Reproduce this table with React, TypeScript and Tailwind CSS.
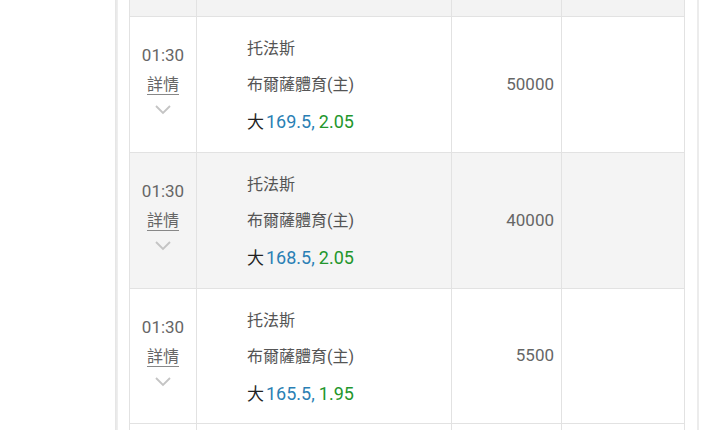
import React from "react";

const rows = [
  { bg: "bg-white", amt: "50000", line: "169.5", odds: "2.05", h: "h-[136px]" },
  { bg: "bg-[#f4f4f4]", amt: "40000", line: "168.5", odds: "2.05", h: "h-[136px]" },
  { bg: "bg-white", amt: "5500", line: "165.5", odds: "1.95", h: "h-[135px]" },
];

function Chevron() {
  return (
    <svg width="18" height="11" viewBox="0 0 18 11" fill="none">
      <path d="M2 2 L9 9 L16 2" stroke="#c4c4c4" strokeWidth="1.8" />
    </svg>
  );
}

export default function App() {
  return (
    <div
      className="w-[720px] h-[430px] overflow-hidden bg-white flex text-[16px]"
      style={{ fontFamily: "Roboto, 'Noto Sans CJK TC', sans-serif" }}
    >
      <div className="w-[115px] shrink-0" />
      <div className="w-[3px] shrink-0 bg-gradient-to-r from-[#e4e4e4] to-[#f0f0f0]" />
      <div className="w-[11px] shrink-0" />
      <div className="w-[556px] shrink-0 border-l border-r border-[#e2e2e2] flex flex-col">
        <div className="flex h-[17px] shrink-0 bg-[#f3f3f3] border-b border-[#e2e2e2]">
          <div className="w-[67px] border-r border-[#e2e2e2]" />
          <div className="w-[255px] border-r border-[#e2e2e2]" />
          <div className="w-[110px] border-r border-[#e2e2e2]" />
          <div className="flex-1" />
        </div>
        {rows.map((r, i) => (
          <div key={i} className={`flex ${r.h} shrink-0 ${r.bg} border-b border-[#e2e2e2]`}>
            <div className="w-[67px] border-r border-[#e2e2e2] flex flex-col items-center pt-[23px] text-[#666]">
              <div className="leading-[30px] text-[17px]">01:30</div>
              <div className="leading-[30px] underline underline-offset-[4px] decoration-[#888]">詳情</div>
              <div className="mt-[4px] flex">
                <Chevron />
              </div>
            </div>
            <div className="w-[255px] border-r border-[#e2e2e2] flex flex-col pt-[14px] pl-[50px] text-[#555]">
              <div className="leading-[36px]">托法斯</div>
              <div className="leading-[36px]">布爾薩體育(主)</div>
              <div className="flex items-center leading-[38px] text-[18px]">
                <span className="text-[#222] text-[17px]">大</span>
                <span className="text-[#2a7fb4] ml-[2px]">{r.line},</span>
                <span className="text-[#23962c] ml-[4px]">{r.odds}</span>
              </div>
            </div>
            <div className="w-[110px] border-r border-[#e2e2e2] flex items-center justify-end pr-[7px] text-[#666] text-[17px]">
              {r.amt}
            </div>
            <div className="flex-1" />
          </div>
        ))}
        <div className="flex flex-1 bg-white">
          <div className="w-[67px] border-r border-[#e2e2e2]" />
          <div className="w-[255px] border-r border-[#e2e2e2]" />
          <div className="w-[110px] border-r border-[#e2e2e2]" />
          <div className="flex-1" />
        </div>
      </div>
      <div className="w-[12px] shrink-0" />
      <div className="w-[2px] shrink-0 bg-[#ececec]" />
      <div className="flex-1" />
    </div>
  );
}
